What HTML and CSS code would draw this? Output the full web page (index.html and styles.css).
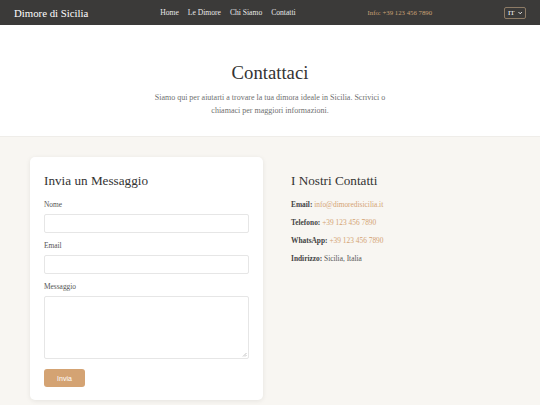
FILE: index.html
```html
<!DOCTYPE html>
<html lang="it">
<head>
<meta charset="utf-8">
<title>Contattaci - Dimore di Sicilia</title>
<link rel="stylesheet" href="styles.css">
</head>
<body>
<header class="topbar">
  <div class="logo">Dimore di Sicilia</div>
  <nav class="nav">
    <a href="#">Home</a>
    <a href="#">Le Dimore</a>
    <a href="#">Chi Siamo</a>
    <a href="#">Contatti</a>
  </nav>
  <div class="info">Info: +39 123 456 7890</div>
  <div class="lang">IT <svg width="6" height="4" viewBox="0 0 6 4"><path d="M0.8 0.8 L3 3 L5.2 0.8" fill="none" stroke="#fff" stroke-width="1.3"/></svg></div>
</header>

<section class="hero">
  <h1>Contattaci</h1>
  <p>Siamo qui per aiutarti a trovare la tua dimora ideale in Sicilia. Scrivici o chiamaci per maggiori informazioni.</p>
</section>

<section class="contact">
  <div class="card">
    <h2>Invia un Messaggio</h2>
    <div class="group">
      <label>Nome</label>
      <div class="field"></div>
    </div>
    <div class="group">
      <label>Email</label>
      <div class="field"></div>
    </div>
    <div class="group">
      <label>Messaggio</label>
      <div class="field area"><svg class="grip" width="5" height="5" viewBox="0 0 5 5"><path d="M4.5 1 L1 4.5 M4.5 3 L3 4.5" stroke="#aaa" stroke-width="0.7"/></svg></div>
    </div>
    <button class="btn">Invia</button>
  </div>
  <div class="details">
    <h2>I Nostri Contatti</h2>
    <p><b>Email:</b> <span class="accent">info@dimoredisicilia.it</span></p>
    <p><b>Telefono:</b> <span class="accent">+39 123 456 7890</span></p>
    <p><b>WhatsApp:</b> <span class="accent">+39 123 456 7890</span></p>
    <p><b>Indirizzo:</b> Sicilia, Italia</p>
  </div>
</section>
</body>
</html>
```

FILE: styles.css
```css
* { box-sizing: border-box; }
html, body { margin: 0; padding: 0; }
body {
  font-family: "Liberation Serif", "Times New Roman", serif;
  color: #333;
  background: #f8f6f2;
  width: 540px;
  height: 405px;
  overflow: hidden;
}
.topbar {
  height: 25px;
  background: #3b3a39;
  display: flex;
  align-items: center;
  justify-content: space-between;
  padding: 0 14px;
}
.logo {
  color: #fff;
  font-size: 10.8px;
}
.nav {
  display: flex;
  gap: 9px;
}
.nav a {
  color: #e8e8e8;
  text-decoration: none;
  font-size: 7.6px;
}
.info {
  color: #c9a175;
  font-size: 6.8px;
}
.lang {
  display: flex;
  align-items: center;
  gap: 3px;
  height: 12px;
  width: 22px;
  padding: 0 3px;
  border: 1px solid #8d7b66;
  border-radius: 2px;
  color: #fff;
  font-size: 7px;
}
.hero {
  background: #fff;
  text-align: center;
  padding: 36px 0 19px;
  border-bottom: 1px solid #efede9;
}
.hero h1 {
  margin: 0 0 6px;
  font-weight: normal;
  font-size: 18.7px;
  line-height: 24px;
  color: #333;
}
.hero p {
  margin: 0 auto;
  max-width: 240px;
  font-size: 8px;
  line-height: 13px;
  color: #6f6f6f;
}
.contact {
  display: grid;
  grid-template-columns: 233px 233px;
  gap: 14px;
  padding: 20px 30px;
}
.card {
  background: #fff;
  border-radius: 5px;
  padding: 14px 14px 13px;
  box-shadow: 0 1px 5px rgba(0,0,0,0.08);
}
.details { padding: 14px; }
h2 {
  margin: 0 0 9px;
  font-weight: normal;
  font-size: 13.2px;
  line-height: 20px;
  color: #333;
}
.group { margin-bottom: 8px; }
label {
  display: block;
  font-size: 7.4px;
  line-height: 10px;
  margin-bottom: 4px;
  color: #555;
}
.field {
  height: 19px;
  border: 1px solid #e6e6e6;
  border-radius: 2px;
  background: #fff;
}
.field.area {
  height: 63px;
  position: relative;
  margin-bottom: 10px;
}
.grip { position: absolute; right: 1px; bottom: 1px; }
.btn {
  display: block;
  width: 41px;
  height: 18px;
  border: none;
  border-radius: 3px;
  background: #d4a373;
  color: #fff;
  font-family: "Liberation Sans", Arial, sans-serif;
  font-size: 7px;
  padding: 0;
}
.details p {
  margin: 0 0 8px;
  font-size: 7.4px;
  line-height: 10px;
  color: #555;
}
.details b { color: #444; }
.accent { color: #d4a373; }
```
